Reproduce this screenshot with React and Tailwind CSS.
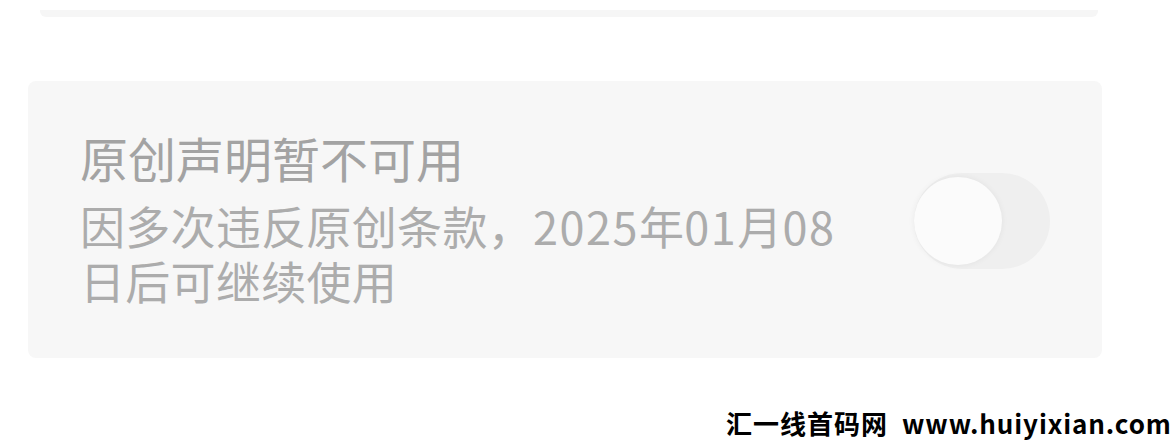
export default function App() {
  const cjk = { fontFamily: '"Noto Sans CJK SC", "Noto Sans", sans-serif' };
  return (
    <div className="relative w-[1171px] h-[440px] bg-white overflow-hidden" style={cjk}>
      <div className="pt-[10px] pl-[40px]">
        <div className="w-[1058px] h-[7px] bg-[#f6f6f6] rounded-b-[6px]" />
      </div>
      <div className="ml-[28px] mt-[64px] w-[1074px] h-[277px] bg-[#f7f7f7] rounded-[8px] flex items-start justify-between pl-[52px] pr-[52px]">
        <div className="flex flex-col pt-[46px]">
          <div className="text-[48px] leading-[60px] text-[#a3a3a3]">原创声明暂不可用</div>
          <div className="mt-[11px] text-[45px] leading-[55px] text-[#acacac] w-[780px] tracking-[0.3px]">
            因多次违反原创条款，<span className="tracking-[1.5px]">2025</span>年<span className="tracking-[1.5px]">01</span>月<span className="tracking-[1.5px]">08</span>
            <br />日后可继续使用
          </div>
        </div>
        <div className="relative self-center w-[136px] h-[96px] rounded-full bg-[#efefef] mt-[2px]">
          <div className="absolute left-[0px] top-[4px] w-[88px] h-[88px] rounded-full bg-[#fbfbfb] shadow-[0_0_6px_rgba(0,0,0,0.06)]" />
        </div>
      </div>
      <div className="absolute left-[726px] top-[407px] text-[26px] leading-[32px] font-bold text-black whitespace-nowrap">
        <span className="tracking-[1px]">汇一线首码网</span>
        <span className="ml-[14px] tracking-[0.9px]">www.huiyixian.com</span>
      </div>
    </div>
  );
}
